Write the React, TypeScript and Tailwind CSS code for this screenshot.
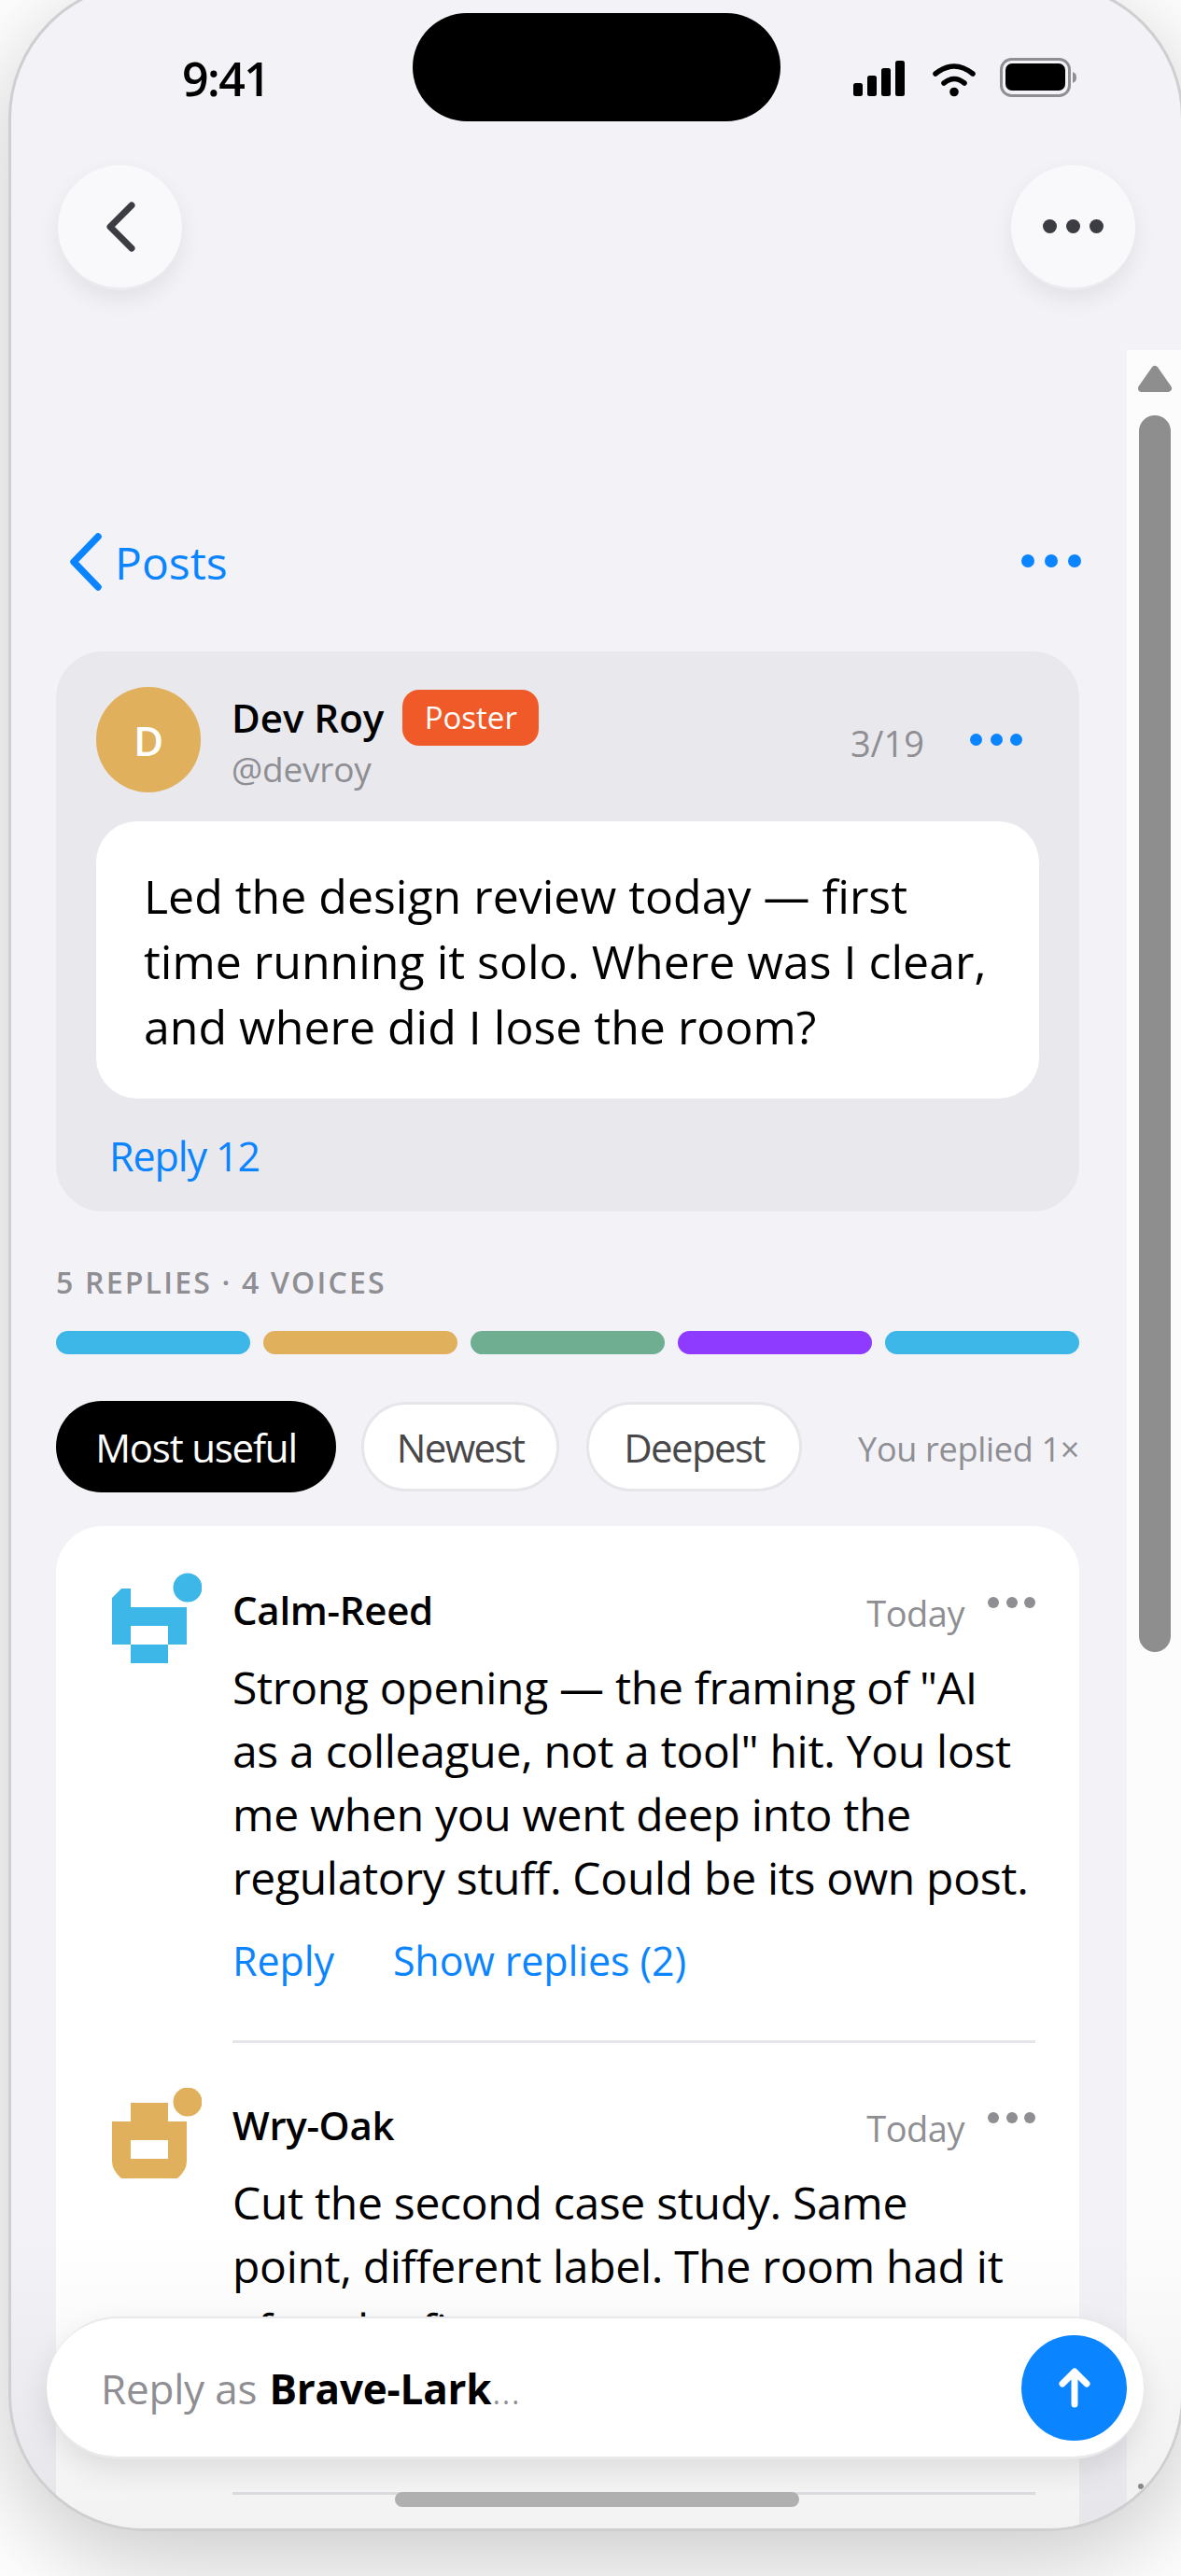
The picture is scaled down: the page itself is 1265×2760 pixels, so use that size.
import React from "react";

const FONT = "[font-family:'Open_Sans','Noto_Sans',sans-serif]";

function Dots({ dot, gap, color }: { dot: string; gap: string; color: string }) {
  return (
    <div className={`flex items-center ${gap}`}>
      <span className={`block rounded-full ${dot} ${color}`} />
      <span className={`block rounded-full ${dot} ${color}`} />
      <span className={`block rounded-full ${dot} ${color}`} />
    </div>
  );
}

function BlueAvatar() {
  return (
    <svg width="111" height="100" viewBox="0 0 111 100" className="block shrink-0">
      <path d="M15 27 L25 17 L35 17 L35 37 L95 37 L95 77 L75 77 L75 97 L35 97 L35 77 L15 77 Z" fill="#3db7e8" />
      <rect x="35" y="57" width="40" height="20" fill="#ffffff" />
      <circle cx="96" cy="16" r="19" fill="#ffffff" />
      <circle cx="96" cy="16" r="15.5" fill="#3db7e8" />
    </svg>
  );
}

function GoldAvatar() {
  return (
    <svg width="111" height="100" viewBox="0 0 111 100" className="block shrink-0">
      <path d="M35 16 L75 16 L75 36 L95 36 L95 79 Q95 88 85 97 L25 97 Q15 88 15 79 L15 36 L35 36 Z" fill="#e0b05c" />
      <rect x="35" y="56" width="40" height="20" fill="#ffffff" />
      <circle cx="96" cy="15" r="19" fill="#ffffff" />
      <circle cx="96" cy="15" r="15.5" fill="#e0b05c" />
    </svg>
  );
}

function Comment({ avatar, name, lines }: { avatar: React.ReactNode; name: string; lines: string[] }) {
  return (
    <div className="flex">
      <div className="w-[189px] shrink-0 pl-[45px] -mt-[12px]">{avatar}</div>
      <div className="w-[860px]">
        <div className="flex h-[60px] items-center">
          <span className="-mt-[5px] text-[42px] font-semibold tracking-[-0.3px] text-black">{name}</span>
          <span className="ml-auto mt-[3px] text-[38px] tracking-[-0.5px] text-[#8e8e93]">Today</span>
          <div className="ml-[25px] -mt-[20px]">
            <Dots dot="h-[12px] w-[12px]" gap="gap-[7.5px]" color="bg-[#8e8e93]" />
          </div>
        </div>
        <div className="mt-[17px] text-[48px] leading-[68px] tracking-[-0.3px] text-black">
          {lines.map((l) => (
            <div key={l} className="whitespace-nowrap">{l}</div>
          ))}
        </div>
        <div className="mt-[25px] flex h-[60px] items-center gap-[63px] text-[43px] font-medium tracking-[-0.1px] text-[#0a84ff]">
          <span>Reply</span>
          <span>Show replies (2)</span>
        </div>
        <div className="mt-[55px] h-[3px] bg-[#e5e5ea]" />
      </div>
    </div>
  );
}

export default function App() {
  return (
    <div className={`h-[2760px] w-[1265px] overflow-hidden bg-white ${FONT}`}>
      <div className="relative -mt-[19px] ml-[9px] h-[2731px] w-[1259px] overflow-hidden rounded-[146px] border-[3px] border-[#cfcfd2] bg-[#f2f2f7] shadow-[0_30px_110px_rgba(0,0,0,0.22)]">
        {/* dynamic island */}
        <div className="absolute left-[430px] top-[30px] h-[116px] w-[394px] rounded-full bg-black" />

        {/* status bar */}
        <div className="flex h-[193px] items-start pl-[183px] pt-[76px]">
          <span className="text-[50px] font-semibold leading-[48px] tracking-[-1.5px] text-black">9:41</span>
          <svg width="240" height="48" viewBox="0 0 240 48" className="ml-[626px] block shrink-0">
            <rect x="0" y="29" width="10" height="14" rx="2.5" fill="#000" />
            <rect x="15" y="21" width="10" height="22" rx="2.5" fill="#000" />
            <rect x="30" y="13" width="10" height="30" rx="2.5" fill="#000" />
            <rect x="45" y="5" width="10" height="38" rx="2.5" fill="#000" />
            <path d="M88 19 Q108 3 128 19" fill="none" stroke="#000" strokeWidth="5.5" strokeLinecap="round" />
            <path d="M97 29 Q108 20 119 29" fill="none" stroke="#000" strokeWidth="5.5" strokeLinecap="round" />
            <circle cx="108" cy="38.5" r="4.8" fill="#000" />
            <rect x="158.5" y="3.5" width="73" height="39" rx="11" fill="none" stroke="#8e8e93" strokeWidth="3" />
            <rect x="163" y="8" width="64" height="29" rx="7" fill="#000" />
            <path d="M235 17 L238 19 Q240 23 238 27 L235 29 Z" fill="#8e8e93" />
          </svg>
        </div>

        {/* floating nav */}
        <div className="flex justify-between pl-[50px] pr-[49px]">
          <div className="flex h-[134px] w-[133px] items-center justify-center rounded-full border-b-[3px] border-[#ececf0] bg-[#f9f9fb] shadow-[0_10px_24px_rgba(0,0,0,0.07)]">
            <svg width="40" height="62" viewBox="0 0 40 62" className="block">
              <path d="M32 8 L9 31 L32 54" fill="none" stroke="#3c3c43" strokeWidth="7" strokeLinecap="round" strokeLinejoin="round" />
            </svg>
          </div>
          <div className="flex h-[134px] w-[133px] items-center justify-center rounded-full border-b-[3px] border-[#ececf0] bg-[#f9f9fb] shadow-[0_10px_24px_rgba(0,0,0,0.07)]">
            <Dots dot="h-[15px] w-[15px]" gap="gap-[10px]" color="bg-[#3c3c43]" />
          </div>
        </div>

        {/* page content */}
        <div className="pl-[48px] pr-[109px]">
          {/* Posts row */}
          <div className="mt-[252px] flex h-[80px] items-center">
            <svg width="36" height="62" viewBox="0 0 36 62" className="ml-[14px] -mt-[2px] block shrink-0">
              <path d="M31 4 L5 31 L31 58" fill="none" stroke="#0a84ff" strokeWidth="7.5" strokeLinecap="round" strokeLinejoin="round" />
            </svg>
            <span className="ml-[13px] text-[48px] text-[#0a84ff]">Posts</span>
            <div className="-mr-[2px] ml-auto -mt-[4px]">
              <Dots dot="h-[14px] w-[14px]" gap="gap-[11px]" color="bg-[#0a84ff]" />
            </div>
          </div>

          {/* post card */}
          <div className="mt-[55px] h-[600px] rounded-[50px] bg-[#e8e8ed] pl-[43px] pr-[43px] pt-[38px]">
            <div className="flex h-[113px] items-start">
              <div className="flex h-[113px] w-[112px] shrink-0 items-center justify-center rounded-full bg-[#e0b05c] text-[44px] font-semibold text-white">D</div>
              <div className="ml-[33px]">
                <div className="mt-[3px] flex items-center">
                  <span className="text-[42px] font-semibold leading-[60px] text-black">Dev Roy</span>
                  <span className="ml-[20px] flex h-[60px] w-[146px] items-center justify-center rounded-[18px] bg-[#f05a28] text-[33px] font-medium text-white">Poster</span>
                </div>
                <div className="-mt-[3px] text-[37px] leading-[56px] tracking-[-0.2px] text-[#8e8e93]">@devroy</div>
              </div>
              <div className="ml-auto mr-[18px] mt-[31px] flex items-center">
                <span className="text-[38px] leading-[58px] text-[#8e8e93]">3/19</span>
                <div className="ml-[49px] -mt-[8px]">
                  <Dots dot="h-[13px] w-[13px]" gap="gap-[8.5px]" color="bg-[#0a84ff]" />
                </div>
              </div>
            </div>
            <div className="mt-[31px] h-[297px] rounded-[44px] bg-white pl-[51px] pt-[45px] text-[50px] leading-[70px] text-black">
              <div className="whitespace-nowrap">Led the design review today — first</div>
              <div className="whitespace-nowrap">time running it solo. Where was I clear,</div>
              <div className="whitespace-nowrap">and where did I lose the room?</div>
            </div>
            <div className="ml-[14px] mt-[32px] text-[43px] font-medium leading-[60px] tracking-[-1.1px] text-[#0a84ff]">Reply 12</div>
          </div>

          {/* stats */}
          <div className="mt-[52px] text-[32px] font-semibold leading-[48px] tracking-[2.2px] text-[#8e8e93]">5 REPLIES · 4 VOICES</div>
          <div className="mt-[28px] grid h-[25px] grid-cols-5 gap-[13.5px]">
            <div className="rounded-full bg-[#3db7e8]" />
            <div className="rounded-full bg-[#e0b05c]" />
            <div className="rounded-full bg-[#6fae91]" />
            <div className="rounded-full bg-[#8e3bff]" />
            <div className="rounded-full bg-[#3db7e8]" />
          </div>

          {/* filters */}
          <div className="mt-[50px] flex h-[98px] items-center">
            <div className="flex h-[98px] w-[300px] items-center justify-center rounded-full bg-black text-[42px] font-medium tracking-[-1.2px] text-white">Most useful</div>
            <div className="ml-[27px] flex h-[96px] w-[212px] items-center justify-center rounded-full border-[3px] border-[#e5e5ea] bg-white text-[42px] font-medium tracking-[-1.6px] text-[#48484a]">Newest</div>
            <div className="ml-[29px] flex h-[96px] w-[231px] items-center justify-center rounded-full border-[3px] border-[#e5e5ea] bg-white text-[42px] font-medium tracking-[-1.6px] text-[#48484a]">Deepest</div>
            <span className="ml-auto mt-[5px] whitespace-nowrap text-[36px] tracking-[-0.3px] text-[#8e8e93]">You replied 1×</span>
          </div>

          {/* replies */}
          <div className="mt-[36px] rounded-t-[50px] bg-white pb-[120px] pt-[62px]">
            <Comment
              avatar={<BlueAvatar />}
              name="Calm-Reed"
              lines={[
                'Strong opening — the framing of "AI',
                'as a colleague, not a tool" hit. You lost',
                "me when you went deep into the",
                "regulatory stuff. Could be its own post.",
              ]}
            />
            <div className="h-[60px]" />
            <Comment
              avatar={<GoldAvatar />}
              name="Wry-Oak"
              lines={[
                "Cut the second case study. Same",
                "point, different label. The room had it",
                "after the first.",
              ]}
            />
          </div>
        </div>

        {/* scrollbar */}
        <div className="absolute bottom-0 right-0 top-[391px] w-[58px] bg-[#fcfcfc]">
          <svg width="40" height="32" viewBox="0 0 40 32" className="absolute left-[10px] top-[15px] block">
            <path d="M20 6 L34 26 L6 26 Z" fill="#8e8e8e" stroke="#8e8e8e" strokeWidth="8" strokeLinejoin="round" />
          </svg>
          <div className="absolute left-[13px] top-[70px] h-[1325px] w-[34px] rounded-full bg-[#8e8e8e]" />
          <div className="absolute bottom-[42px] left-[12px] h-[6px] w-[6px] rounded-full bg-[#8e8e8e]" />
        </div>

        {/* bottom fade */}
        <div className="absolute bottom-0 left-0 right-0 h-[320px] bg-gradient-to-b from-transparent to-[rgba(0,0,0,0.05)]" />

        {/* composer */}
        <div className="absolute left-[38px] top-[2498px] flex h-[153px] w-[1175px] items-center rounded-full border-t-[2px] border-b-[3px] border-[#e9e9ec] bg-white pl-[58px] pr-[18px] shadow-[0_12px_32px_rgba(0,0,0,0.10)]">
          <span className="mt-[2px] text-[44px] tracking-[-0.2px] text-[#8e8e93]">
            Reply as <span className="ml-[2px] font-bold text-black">Brave-Lark</span>
            <span className="font-light">...</span>
          </span>
          <div className="ml-auto flex h-[113px] w-[113px] items-center justify-center rounded-full bg-[#0a84ff]">
            <svg width="36" height="46" viewBox="0 0 36 46" className="block">
              <path d="M18 41 L18 6 M5 19 L18 6 L31 19" fill="none" stroke="#fff" strokeWidth="7" strokeLinecap="round" strokeLinejoin="round" />
            </svg>
          </div>
        </div>

        {/* home indicator */}
        <div className="absolute left-[411px] top-[2686px] h-[16px] w-[433px] rounded-full bg-[#b0b0b0]" />
      </div>
    </div>
  );
}
